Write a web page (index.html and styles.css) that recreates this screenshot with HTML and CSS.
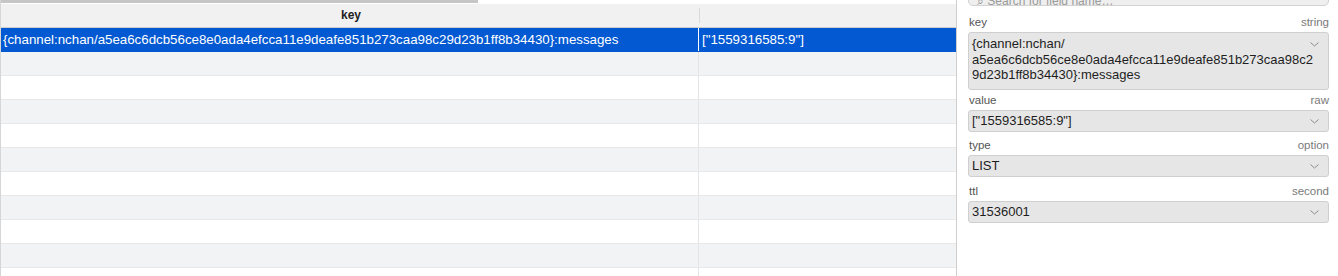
FILE: index.html
```html
<!DOCTYPE html>
<html lang="en">
<head>
  <meta charset="UTF-8">
  <title>Keys</title>
  <link rel="stylesheet" href="styles.css">
</head>
<body>
  <div class="table-pane">
    <div class="hscroll"><div class="hscroll-thumb"></div></div>
    <div class="row header">
      <div class="cell col-key">key</div>
      <div class="cell col-value"></div>
    </div>
    <div class="row selected">
      <div class="cell col-key">{channel:nchan/a5ea6c6dcb56ce8e0ada4efcca11e9deafe851b273caa98c29d23b1ff8b34430}:messages</div>
      <div class="cell col-value">["1559316585:9"]</div>
    </div>
    <div class="row odd"><div class="cell col-key"></div><div class="cell col-value"></div></div>
    <div class="row"><div class="cell col-key"></div><div class="cell col-value"></div></div>
    <div class="row odd"><div class="cell col-key"></div><div class="cell col-value"></div></div>
    <div class="row"><div class="cell col-key"></div><div class="cell col-value"></div></div>
    <div class="row odd"><div class="cell col-key"></div><div class="cell col-value"></div></div>
    <div class="row"><div class="cell col-key"></div><div class="cell col-value"></div></div>
    <div class="row odd"><div class="cell col-key"></div><div class="cell col-value"></div></div>
    <div class="row"><div class="cell col-key"></div><div class="cell col-value"></div></div>
    <div class="row odd"><div class="cell col-key"></div><div class="cell col-value"></div></div>
    <div class="row"><div class="cell col-key"></div><div class="cell col-value"></div></div>
  </div>

  <div class="detail-pane">
    <div class="search">&#8981; Search for field name&hellip;</div>

    <div class="field first">
      <div class="field-label"><span>key</span><span class="kind">string</span></div>
      <div class="field-box multi">
        <div class="field-text">{channel:nchan/<br>a5ea6c6dcb56ce8e0ada4efcca11e9deafe851b273caa98c29d23b1ff8b34430}:messages</div>
        <svg class="chevron" width="9" height="5" viewBox="0 0 9 5"><polyline points="0.5,0.5 4.5,4 8.5,0.5" fill="none" stroke="#8c8c8c" stroke-width="1"/></svg>
      </div>
    </div>

    <div class="field after-multi">
      <div class="field-label"><span>value</span><span class="kind">raw</span></div>
      <div class="field-box">
        <div class="field-text">["1559316585:9"]</div>
        <svg class="chevron" width="9" height="5" viewBox="0 0 9 5"><polyline points="0.5,0.5 4.5,4 8.5,0.5" fill="none" stroke="#8c8c8c" stroke-width="1"/></svg>
      </div>
    </div>

    <div class="field">
      <div class="field-label"><span>type</span><span class="kind">option</span></div>
      <div class="field-box">
        <div class="field-text">LIST</div>
        <svg class="chevron" width="9" height="5" viewBox="0 0 9 5"><polyline points="0.5,0.5 4.5,4 8.5,0.5" fill="none" stroke="#8c8c8c" stroke-width="1"/></svg>
      </div>
    </div>

    <div class="field last">
      <div class="field-label"><span>ttl</span><span class="kind">second</span></div>
      <div class="field-box">
        <div class="field-text">31536001</div>
        <svg class="chevron" width="9" height="5" viewBox="0 0 9 5"><polyline points="0.5,0.5 4.5,4 8.5,0.5" fill="none" stroke="#8c8c8c" stroke-width="1"/></svg>
      </div>
    </div>
  </div>
</body>
</html>
```

FILE: styles.css
```css
* {
  box-sizing: border-box;
}

body {
  margin: 0;
  width: 1338px;
  height: 276px;
  overflow: hidden;
  display: flex;
  background-color: #fff;
  font-family: "Liberation Sans", Arial, sans-serif;
  font-size: 13px;
  color: #222;
}

.table-pane {
  width: 957px;
  height: 276px;
  overflow: hidden;
  border-left: 1px solid #d6d6d6;
  border-right: 1px solid #cfcfcf;
  flex-shrink: 0;
}

.hscroll {
  height: 4px;
  background-color: #fff;
}

.hscroll-thumb {
  width: 477px;
  height: 3px;
  background-color: #c6c6c6;
}

.row {
  display: flex;
  height: 24px;
  border-bottom: 1px solid #e8e8e8;
  line-height: 23px;
  font-size: 13.3px;
}

.row.odd {
  background-color: #f2f3f5;
}

.row.header {
  background-color: #f1f1f1;
  border-bottom: 1px solid #cdcdcd;
  font-weight: bold;
  font-size: 12px;
}

.row.header .col-key {
  text-align: center;
  border-right: none;
}

.row.header .col-value {
  border-left: 1px solid #d9d9d9;
  margin: 4px 0;
}

.row.selected {
  background-color: #0359d2;
  color: #fff;
  border-bottom-color: #0359d2;
}

.cell {
  white-space: nowrap;
  overflow: hidden;
}

.col-key {
  width: 698px;
  padding-left: 2px;
  border-right: 1px solid #e4e4e4;
}

.col-value {
  flex: 1;
  padding-left: 3px;
}

.row.selected .col-key {
  border-right-color: #fff;
}

.detail-pane {
  flex: 1;
  padding: 0 9px 0 11px;
}

.search {
  margin-top: -18px;
  height: 24px;
  padding: 11px 8px 0;
  line-height: 14px;
  font-size: 12px;
  color: #9a9a9a;
  background-color: #efefef;
  border: 1px solid #d2d2d2;
  border-radius: 5px;
  overflow: hidden;
}

.field {
  margin-top: 6px;
}

.field.first {
  margin-top: 9px;
}

.field.after-multi {
  margin-top: 3px;
}

.field.last {
  margin-top: 7px;
}

.field-label {
  display: flex;
  justify-content: space-between;
  height: 17px;
  line-height: 15px;
  font-size: 11.5px;
  color: #555;
  padding-left: 1px;
}

.field-label .kind {
  color: #7a7a7a;
}

.field-box {
  position: relative;
  display: flex;
  align-items: center;
  height: 22px;
  padding: 0 7px 0 3px;
  background-color: #e6e6e6;
  border: 1px solid #cfcfcf;
  border-radius: 3px;
}

.field-box.multi {
  height: 58px;
  align-items: flex-start;
  padding: 3px 12px 0 3px;
}

.field-text {
  flex: 1;
  line-height: 15.5px;
  word-break: break-all;
  color: #1e1e1e;
}

.chevron {
  position: absolute;
  right: 9px;
  top: 8px;
}

.field-box.multi .chevron {
  top: 9px;
}
```
